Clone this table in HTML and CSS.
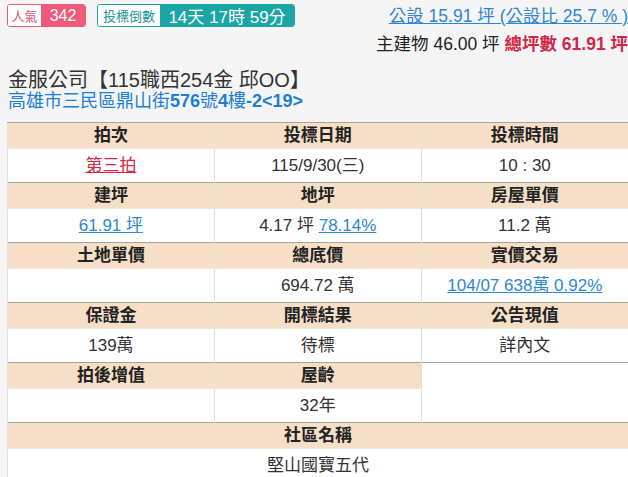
FILE: index.html
```html
<!DOCTYPE html>
<html lang="zh-Hant">
<head>
<meta charset="utf-8">
<title>金服公司</title>
<link rel="stylesheet" href="styles.css">
</head>
<body>
<div class="page">
  <div class="topbar">
    <div class="badges">
      <span class="badge pink"><span class="b-label">人氣</span><span class="b-value">342</span></span>
      <span class="badge teal"><span class="b-label">投標倒數</span><span class="b-value">14天 17時 59分</span></span>
    </div>
    <div class="area">
      <div class="area-line"><a class="link" href="#">公設 15.91 坪 (公設比 25.7 % )</a></div>
      <div class="area-line">主建物 46.00 坪 <b class="total">總坪數 61.91 坪</b></div>
    </div>
  </div>
  <h1 class="title">金服公司【115職西254金 邱OO】</h1>
  <div class="address"><span class="cjk">高雄市三民區鼎山街</span>576<span class="cjk">號</span>4<span class="cjk">樓</span>-2&lt;19&gt;</div>
  <table class="info">
    <tr class="hd"><th>拍次</th><th>投標日期</th><th>投標時間</th></tr>
    <tr class="dt"><td><a class="red" href="#">第三拍</a></td><td>115/9/30(三)</td><td>10 : 30</td></tr>
    <tr class="hd"><th>建坪</th><th>地坪</th><th>房屋單價</th></tr>
    <tr class="dt"><td><a class="link" href="#">61.91 坪</a></td><td>4.17 坪 <a class="link" href="#">78.14%</a></td><td>11.2 萬</td></tr>
    <tr class="hd"><th>土地單價</th><th>總底價</th><th>實價交易</th></tr>
    <tr class="dt"><td></td><td>694.72 萬</td><td><a class="link" href="#">104/07 638萬 0.92%</a></td></tr>
    <tr class="hd"><th>保證金</th><th>開標結果</th><th>公告現值</th></tr>
    <tr class="dt"><td>139萬</td><td>待標</td><td>詳內文</td></tr>
    <tr class="hd"><th>拍後增值</th><th>屋齡</th><td class="blank"></td></tr>
    <tr class="dt"><td></td><td>32年</td><td class="blank"></td></tr>
    <tr class="hd"><th colspan="3">社區名稱</th></tr>
    <tr class="dt"><td colspan="3">堅山國寶五代</td></tr>
  </table>
</div>
</body>
</html>
```
FILE: styles.css
```css
html, body {
  margin: 0;
  padding: 0;
  background: #f5f5f5;
}
body {
  font-family: "Liberation Sans", "Noto Sans CJK TC", sans-serif;
  color: #222;
  overflow: hidden;
}
.page {
  padding: 2px 0 0 7px;
}
.topbar {
  display: flex;
  justify-content: space-between;
  align-items: flex-start;
}
.badges {
  display: flex;
  gap: 11px;
  margin-top: 2px;
}
.badge {
  display: flex;
  height: 23px;
  box-sizing: border-box;
  border-radius: 3px;
  overflow: hidden;
  border: 1px solid;
}
.b-label {
  display: flex;
  align-items: center;
  justify-content: center;
  background: #fff;
  font-size: 13px;
  white-space: nowrap;
}
.b-value {
  display: flex;
  align-items: center;
  justify-content: center;
  color: #fff;
  white-space: nowrap;
}
.pink { border-color: #f0587c; }
.pink .b-label { color: #e0506f; width: 33px; }
.pink .b-value { background: #f0587c; font-size: 16px; width: 44px; }
.teal { border-color: #1ba6a6; }
.teal .b-label { color: #1a9595; width: 62px; }
.teal .b-value { background: #1ba6a6; font-size: 17px; width: 134px; }

.area {
  text-align: right;
  font-size: 17.5px;
  line-height: 28px;
  white-space: nowrap;
}
.link {
  color: #2f86d2;
  text-decoration: underline;
}
.total {
  color: #d32647;
}
.title {
  margin: 12px 0 0 1px;
  font-size: 20px;
  font-weight: normal;
  line-height: 21px;
  color: #333;
}
.address {
  margin-left: 1px;
  font-size: 18px;
  line-height: 21px;
  font-weight: bold;
  color: #1e7fd8;
}
.address .cjk {
  font-weight: normal;
}
.info {
  margin-top: 10px;
  width: 100%;
  border-collapse: collapse;
  table-layout: fixed;
  border-left: 1px solid #9c9c9c;
  font-size: 17px;
  line-height: 20px;
}
.info th, .info td {
  text-align: center;
  padding: 0;
}
.hd th {
  height: 25px;
  background: #f5dfc7;
  font-weight: bold;
  color: #222;
  border-top: 1px solid #aaa398;
  border-bottom: 1px solid #f1e8de;
  border-left: 1px solid #efe1d0;
}
.hd td.blank {
  height: 25px;
  border-top: 1px solid #aaa398;
  border-left: 1px solid #ddd;
  background: #fff;
}
.dt td {
  height: 33px;
  background: #fff;
  color: #333;
  border-left: 1px solid #ddd;
}
.red {
  color: #d3283e;
  text-decoration: underline;
}
```
